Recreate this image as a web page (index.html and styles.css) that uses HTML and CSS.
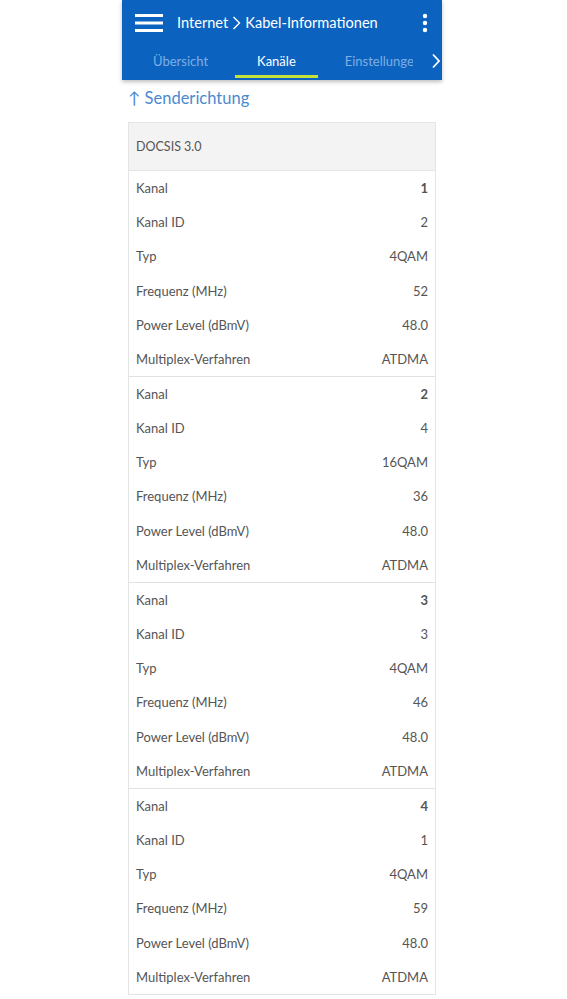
FILE: index.html
```html
<!DOCTYPE html>
<html lang="de">
<head>
<meta charset="utf-8">
<link rel="stylesheet" href="styles.css">
</head>
<body>
<div class="page">
  <header class="appbar">
    <div class="toprow">
      <svg class="burger" width="28" height="20" viewBox="0 0 28 20"><rect x="0" y="1" width="28" height="3" fill="#fff"/><rect x="0" y="8.5" width="28" height="3" fill="#fff"/><rect x="0" y="16" width="28" height="3" fill="#fff"/></svg>
      <div class="title">Internet <svg class="crumb" width="9" height="14" viewBox="0 0 9 14"><path d="M1.5 1 L7.5 7 L1.5 13" fill="none" stroke="#fff" stroke-width="1.4"/></svg> Kabel-Informationen</div>
      <svg class="kebab" width="6" height="20" viewBox="0 0 6 20"><circle cx="3" cy="3" r="2.2" fill="#fff"/><circle cx="3" cy="10" r="2.2" fill="#fff"/><circle cx="3" cy="17" r="2.2" fill="#fff"/></svg>
    </div>
    <div class="tabrow">
      <div class="tabs">
        <div class="tab">Übersicht</div>
        <div class="tab active">Kanäle</div>
        <div class="tab">Einstellungen</div>
      </div>
      <svg class="next" width="10" height="16" viewBox="0 0 10 16"><path d="M2 1.5 L8 8 L2 14.5" fill="none" stroke="#fff" stroke-width="1.8"/></svg>
    </div>
  </header>
  <h2 class="dir">↑ Senderichtung</h2>
  <div class="card">
    <div class="cardhead">DOCSIS 3.0</div>
    <div class="group">
      <div class="row"><span>Kanal</span><b>1</b></div>
      <div class="row"><span>Kanal ID</span><span>2</span></div>
      <div class="row"><span>Typ</span><span>4QAM</span></div>
      <div class="row"><span>Frequenz (MHz)</span><span>52</span></div>
      <div class="row"><span>Power Level (dBmV)</span><span>48.0</span></div>
      <div class="row"><span>Multiplex-Verfahren</span><span>ATDMA</span></div>
    </div>
    <div class="group">
      <div class="row"><span>Kanal</span><b>2</b></div>
      <div class="row"><span>Kanal ID</span><span>4</span></div>
      <div class="row"><span>Typ</span><span>16QAM</span></div>
      <div class="row"><span>Frequenz (MHz)</span><span>36</span></div>
      <div class="row"><span>Power Level (dBmV)</span><span>48.0</span></div>
      <div class="row"><span>Multiplex-Verfahren</span><span>ATDMA</span></div>
    </div>
    <div class="group">
      <div class="row"><span>Kanal</span><b>3</b></div>
      <div class="row"><span>Kanal ID</span><span>3</span></div>
      <div class="row"><span>Typ</span><span>4QAM</span></div>
      <div class="row"><span>Frequenz (MHz)</span><span>46</span></div>
      <div class="row"><span>Power Level (dBmV)</span><span>48.0</span></div>
      <div class="row"><span>Multiplex-Verfahren</span><span>ATDMA</span></div>
    </div>
    <div class="group">
      <div class="row"><span>Kanal</span><b>4</b></div>
      <div class="row"><span>Kanal ID</span><span>1</span></div>
      <div class="row"><span>Typ</span><span>4QAM</span></div>
      <div class="row"><span>Frequenz (MHz)</span><span>59</span></div>
      <div class="row"><span>Power Level (dBmV)</span><span>48.0</span></div>
      <div class="row"><span>Multiplex-Verfahren</span><span>ATDMA</span></div>
    </div>
  </div>
</div>
</body>
</html>
```
FILE: styles.css
```css
html, body { margin: 0; padding: 0; background: #fff; }
body { font-family: "Lato", "Noto Sans", sans-serif; color: #555; }
.page { width: 320px; margin: 0 0 0 122px; }
.appbar {
  background: #0c63bf;
  height: 80px;
  box-shadow: 0 2px 4px rgba(0,0,0,0.25);
  color: #fff;
  display: flex;
  flex-direction: column;
}
.toprow { height: 45px; display: flex; align-items: center; padding: 0 14px 0 13px; }
.burger { display: block; flex: none; }
.title { flex: 1; margin-left: 14px; font-size: 14.6px; display: flex; align-items: center; gap: 4px; white-space: nowrap; }
.crumb { display: block; }
.kebab { display: block; flex: none; }
.tabrow { height: 35px; display: flex; align-items: stretch; padding-left: 9px; }
.tabs { display: flex; gap: 5px; overflow: hidden; width: 282px; }
.tab {
  flex: none;
  padding: 0 22px;
  font-size: 13px;
  color: #7eaee3;
  display: flex;
  align-items: center;
  border-bottom: 3px solid transparent;
  margin-bottom: 2px;
  padding-top: 2px;
}
.tab.active { color: #fff; border-bottom-color: #c5e23c; }
.next { display: block; align-self: center; margin-left: 18px; margin-top: -3px; }
.dir { margin: 6px 0 0 6px; font-size: 16.5px; font-weight: normal; color: #4a8ad0; height: 24px; line-height: 24px; }
.card { margin: 12px 6px 4px 6px; border: 1px solid #e4e4e4; }
.cardhead { height: 47px; background: #f3f3f3; font-size: 12.5px; color: #555; display: flex; align-items: center; padding-left: 7px; border-bottom: 1px solid #e4e4e4; }
.group { border-bottom: 1px solid #e2e2e2; }
.group:last-child { border-bottom: none; }
.row { height: 34.17px; display: flex; justify-content: space-between; align-items: center; padding: 0 7px; font-size: 13px; }
.row b { font-weight: bold; color: #555; }
```
